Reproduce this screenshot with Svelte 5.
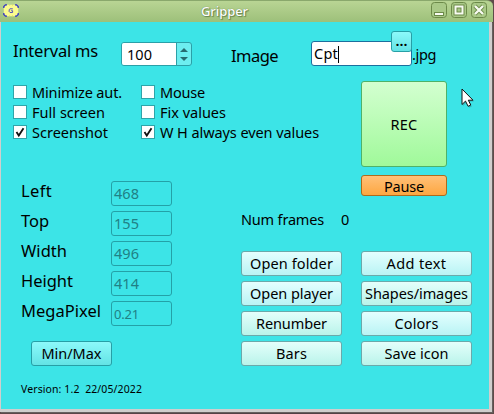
<script>
  const options = [
    { label: 'Minimize aut.', on: false, w: 90 },
    { label: 'Mouse', on: false, w: 45 },
    { label: 'Full screen', on: false, w: 73 },
    { label: 'Fix values', on: false, w: 66 },
    { label: 'Screenshot', on: true, w: 76 },
    { label: 'W H always even values', on: true, w: 159 }
  ];
  const fields = [
    { label: 'Left', value: '468', w: 31 },
    { label: 'Top', value: '155', w: 28 },
    { label: 'Width', value: '496', w: 46 },
    { label: 'Height', value: '414', w: 52 },
    { label: 'MegaPixel', value: '0.21', w: 80, small: true }
  ];
  const tools = [
    { label: 'Open folder', w: 83, tone: 'sky' },
    { label: 'Open player', w: 83, tone: 'sky' },
    { label: 'Renumber', w: 71, tone: 'mint' },
    { label: 'Bars', w: 31, tone: 'mint' }
  ];
  const extras = [
    { label: 'Add text', w: 60, tone: 'sky' },
    { label: 'Shapes/images', w: 103, tone: 'mint' },
    { label: 'Colors', w: 44, tone: 'sky' },
    { label: 'Save icon', w: 64, tone: 'mint' }
  ];

  // Tracks a label so that it takes the given width in pixels.
  function fit(node, width) {
    const n = node.textContent.length;
    const spacing = (width - node.getBoundingClientRect().width) / n;
    node.style.letterSpacing = `${spacing.toFixed(3)}px`;
  }
</script>

<div class="window">
  <header>
    <svg class="logo" width="16" height="13" viewBox="0 0 16 13">
      <rect x="0.8" y="0.8" width="14.4" height="11.4" rx="3.5" fill="#fbfb8e" />
      <path d="M0.8 4V2.5L2.5 0.8H4M12 0.8h1.5l1.7 1.7V4M15.2 9v1.5l-1.7 1.7H12M4 12.2H2.5L0.8 10.5V9" fill="none" stroke="#3535c4" stroke-width="1.3" />
      <path d="M6 1h1M9 1h1M6 12h1M9 12h1" stroke="#d8d860" />
      <path d="M9.8 4.8H7L6.2 5.6v2.1l.8.8h2.6V6.7H8.2" fill="none" stroke="#5656b8" />
    </svg>
    <h1><span use:fit={47}>Gripper</span></h1>
    <div class="controls">
      <svg width="16" height="16" viewBox="0 0 16 16"><rect class="frame" x=".5" y=".5" width="15" height="15" rx="3" /><rect x="3.5" y="10.5" width="9" height="3" fill="#f8fbf2" stroke="#6c8a49" /></svg>
      <svg width="16" height="16" viewBox="0 0 16 16"><rect class="frame" x=".5" y=".5" width="15" height="15" rx="3" /><path d="M4.5 4.5h7v7h-7z" fill="none" stroke="#6c8a49" stroke-width="4" /><path d="M4.5 4.5h7v7h-7z" fill="none" stroke="#f8fbf2" stroke-width="2" /></svg>
      <svg width="16" height="16" viewBox="0 0 16 16"><rect class="frame" x=".5" y=".5" width="15" height="15" rx="3" /><path d="M4 4l8 8M12 4l-8 8" stroke="#6c8a49" stroke-width="4" /><path d="M4 4l8 8M12 4l-8 8" stroke="#f8fbf2" stroke-width="2.4" /></svg>
    </div>
  </header>

  <main>
    <section class="capture">
      <div class="big interval"><span use:fit={85}>Interval ms</span></div>
      <div class="spin">
        <div class="number"><span use:fit={25}>100</span></div>
        <svg width="14" height="22" viewBox="0 0 14 22"><path d="M3 9l4-4 4 4zM3 14h8l-4 4z" fill="#276c70" /></svg>
      </div>
      <div class="big image"><span use:fit={47}>Image</span></div>
      <div class="name">
        <span use:fit={24}>Cpt</span><i class="caret"></i>
        <button class="aqua browse">...</button>
      </div>
      <div class="ext"><span use:fit={24}>.jpg</span></div>
    </section>

    <div class="columns">
      <div class="left">
        <div class="options">
          {#each options as o}
            <div class="option">
              <svg width="14" height="14" viewBox="0 0 14 14">
                <rect x=".5" y=".5" width="13" height="13" fill="#fff" stroke="#2fa5aa" />
                {#if o.on}<path d="M3.5 7l2.3 3.6L10.5 3.2" fill="none" stroke="#111" stroke-width="1.8" />{/if}
              </svg>
              <span use:fit={o.w}>{o.label}</span>
            </div>
          {/each}
        </div>
        <div class="lower">
          <div class="fields">
            {#each fields as f}
              <div class="field">
                <div class="big"><span use:fit={f.w}>{f.label}</span></div>
                <div class="value" class:small={f.small}><span use:fit={25}>{f.value}</span></div>
              </div>
            {/each}
            <button class="aqua minmax"><span use:fit={60}>Min/Max</span></button>
            <div class="version"><span use:fit={121}>Version: 1.2&nbsp; 22/05/2022</span></div>
          </div>
          <div class="frames">
            <div class="count"><span use:fit={83}>Num frames</span><span use:fit={9}>0</span></div>
            <div class="tools">
              {#each tools as t}<button class={t.tone}><span use:fit={t.w}>{t.label}</span></button>{/each}
            </div>
          </div>
        </div>
      </div>
      <div class="right">
        <button class="rec"><span use:fit={27}>REC</span></button>
        <button class="pause"><span use:fit={40}>Pause</span></button>
        <div class="tools">
          {#each extras as t}<button class={t.tone}><span use:fit={t.w}>{t.label}</span></button>{/each}
        </div>
      </div>
    </div>

    <svg class="pointer" width="14" height="21" viewBox="0 0 14 21">
      <path d="M2 2v16l3.6-3.5 2.7 5.2 2.6-1.3-2.5-5H13z" fill="#000" opacity=".18" />
      <path d="M1 1v15.5l3.5-3.4 2.6 5.2 2.7-1.3-2.5-4.8H12z" fill="#fff" stroke="#111" stroke-width="1" />
    </svg>
  </main>
</div>

<style>
  :global(body) { margin: 0; overflow: hidden; }
  .window {
    box-sizing: border-box;
    width: 494px;
    height: 414px;
    display: flex;
    flex-direction: column;
    background: linear-gradient(90deg, #5d4849 0, #504044 60%, #5e4b49 100%);
    font: 14.5px/20px "Noto Sans", sans-serif;
    color: #000;
  }
  span { white-space: nowrap; }
  header {
    box-sizing: border-box;
    height: 22px;
    width: 493px;
    flex: none;
    display: flex;
    align-items: flex-start;
    padding-left: 3px;
    border-top: 1px solid #8aa86c;
    border-radius: 0 6px 0 0;
    background: linear-gradient(#b9d594, #9dc07a);
  }
  .logo { margin-top: 3px; }
  h1 {
    flex: 1;
    margin: 0 0 0 182px;
    font: 500 13px/20px "Noto Sans", sans-serif;
    color: #fff;
    text-shadow: 0 0 1px #58723c, 1px 1px 1px #6b874d;
  }
  .controls { display: flex; gap: 4px; margin: 1px 6px 0 0; }
  .frame { fill: #a9c987; stroke: #6c8a49; }
  main {
    position: relative;
    box-sizing: border-box;
    width: 492px;
    height: 390px;
    flex: none;
    background: #3ce4e7;
    border: solid #d0cecd;
    border-width: 0 3px 3px 1px;
    box-shadow: 1px 1px 0 #66605f;
  }
  .big { font-size: 16.5px; }
  .capture { display: flex; height: 59px; align-items: flex-start; }
  .interval { width: 108px; margin: 19px 0 0 12px; }
  .spin, .name, .value, button { box-sizing: border-box; border-radius: 3px; }
  .spin {
    display: flex;
    width: 71px;
    height: 24px;
    margin-top: 20px;
    border: 1px solid #2ba0a8;
    background: #6deef0;
  }
  .number {
    flex: 1;
    padding-left: 5px;
    line-height: 23px;
    background: #fff;
    border-right: 1px solid #2ba0a8;
    border-radius: 2px 0 0 2px;
  }
  .image { width: 80px; margin: 24px 0 0 39px; }
  .name {
    position: relative;
    display: flex;
    width: 101px;
    height: 25px;
    margin-top: 19px;
    padding-left: 2px;
    border: 1px solid #1c6f9e;
    background: #fff;
    line-height: 23px;
  }
  .caret { width: 1px; height: 17px; margin-top: 4px; background: #000; }
  .browse { position: absolute; left: 79px; top: -11px; width: 21px; height: 21px; font-weight: 600; }
  .ext { margin: 22px 0 0; }
  .columns { display: flex; }
  .left { width: 360px; }
  .options {
    box-sizing: border-box;
    display: grid;
    grid-template-columns: 128px auto;
    grid-auto-rows: 20px;
    height: 100px;
    align-content: start;
    padding: 1px 0 0 12px;
  }
  .option { display: flex; align-items: center; gap: 5px; height: 20px; }
  .option span { line-height: 18px; margin-top: -1px; }
  .lower { display: flex; }
  .fields { width: 220px; padding-left: 20px; box-sizing: border-box; }
  .frames { margin-left: 20px; width: 101px; }
  .field { display: flex; height: 30px; }
  .field .big { width: 90px; }
  .value {
    width: 61px;
    height: 25px;
    padding-left: 2px;
    border: 1px solid #24a1a7;
    color: #208085;
    line-height: 23px;
  }
  .value.small { font-size: 13px; line-height: 24px; }
  button {
    display: flex;
    align-items: center;
    justify-content: center;
    padding: 0 0 2px;
    height: 25px;
    border: 1px solid #6ba9aa;
    font: inherit;
    color: inherit;
  }
  .aqua { border-color: #279fa6; background: linear-gradient(#8cf9fa, #63e3e5); }
  .sky { background: linear-gradient(#e4ffff, #b9f3f4); }
  .mint { background: linear-gradient(#e4fffb, #b9f3ea); }
  .minmax { width: 81px; margin: 10px 0 0 10px; }
  .version { font-size: 10.5px; line-height: 16px; margin-top: 15px; }
  .count { box-sizing: border-box; display: flex; gap: 17px; padding-top: 28px; height: 70px; }
  .tools { display: flex; flex-direction: column; gap: 5px; }
  .right { width: 111px; }
  .rec { width: 86px; height: 86px; padding: 0; border-color: #4eb269; background: linear-gradient(#d3ffd0, #a0f99a); }
  .pause { width: 86px; height: 21px; padding: 0; margin: 8px 0 55px; border-color: #ad6b1d; background: linear-gradient(#ffc078, #fda741); }
  .pointer { position: absolute; left: 460px; top: 66px; }
</style>
